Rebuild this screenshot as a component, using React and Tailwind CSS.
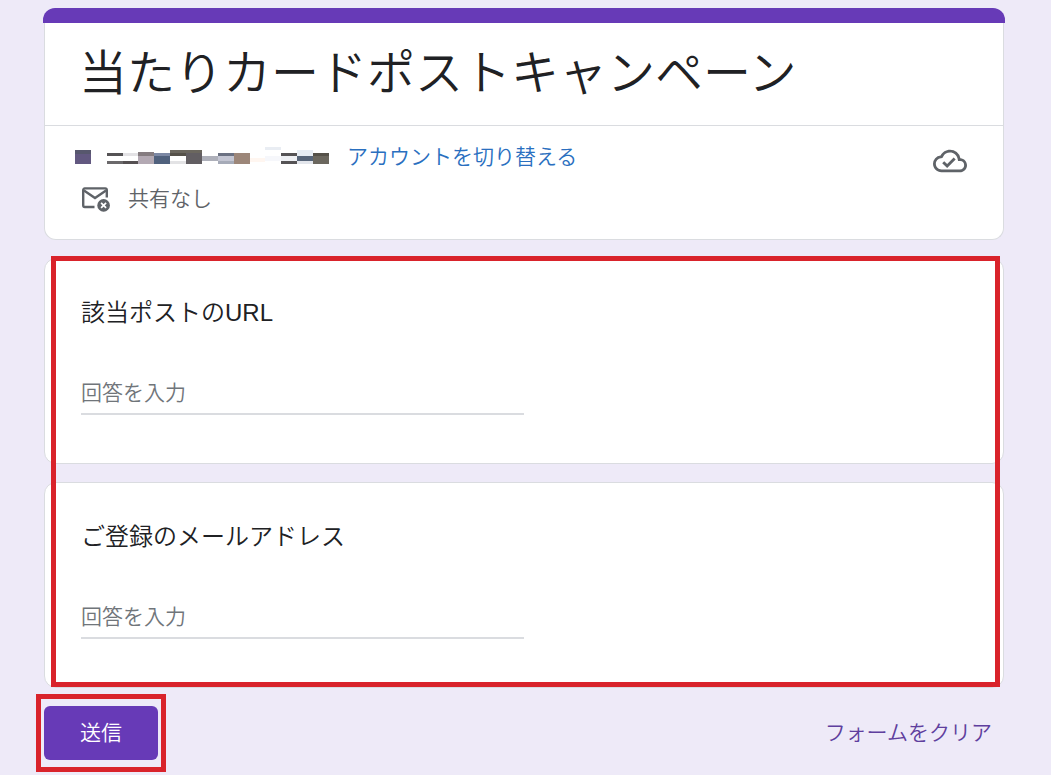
import { useState } from 'react';
import { MdOutlineCloudDone } from 'react-icons/md';

const questions = [
    { id: 'post-url', label: '該当ポストのURL', type: 'url' },
    { id: 'email', label: 'ご登録のメールアドレス', type: 'email' },
];

// [x, y, width, height, color]
const nameBlocks = [
    [0, 5, 16, 4, '#57576d'],
    [0, 9, 16, 10, '#625880'],
    [32, 8, 16, 3, '#555355'],
    [32, 16, 16, 3, '#6b696b'],
    [48, 8, 15, 3, '#e3e2e5'],
    [48, 16, 15, 3, '#555052'],
    [63, 7, 16, 4, '#857c80'],
    [63, 11, 16, 8, '#b3a9b3'],
    [79, 8, 16, 3, '#7c88a4'],
    [79, 11, 16, 8, '#50617d'],
    [95, 5, 32, 3, '#6b675e'],
    [95, 8, 16, 3, '#555149'],
    [95, 16, 16, 3, '#e3e3e5'],
    [111, 8, 16, 11, '#625e62'],
    [127, 11, 16, 5, '#aeb0ba'],
    [143, 8, 16, 3, '#6b7182'],
    [143, 11, 16, 5, '#c4c6d3'],
    [143, 16, 16, 3, '#a6abb8'],
    [159, 8, 16, 11, '#9c8679'],
    [175, 13, 15, 4, '#fff6f0'],
    [190, 2, 16, 3, '#e9edf3'],
    [190, 11, 16, 5, '#f6f7fb'],
    [206, 8, 16, 3, '#555355'],
    [206, 11, 16, 5, '#eef0f4'],
    [206, 16, 16, 3, '#555355'],
    [222, 5, 16, 6, '#e7edf4'],
    [222, 11, 16, 5, '#576579'],
    [222, 16, 16, 3, '#e3e6ec'],
    [238, 8, 16, 3, '#555149'],
    [238, 11, 16, 8, '#6b675e'],
];

function MaskedName() {
    return (
        <svg width="254" height="24" viewBox="0 0 254 24" shapeRendering="crispEdges" aria-hidden="true">
            {nameBlocks.map(([x, y, w, h, color]) => (
                <rect key={`${x}-${y}`} x={x} y={y} width={w} height={h} fill={color} />
            ))}
        </svg>
    );
}

function MailOffIcon() {
    return (
        <svg width="28" height="26" viewBox="0 0 28 26" fill="none" aria-hidden="true">
            <path
                d="M12.5 21H2.8C1.8 21 1.2 20.2 1.2 19.2V4.2C1.2 3.2 1.8 2.4 2.8 2.4H23.2C24.2 2.4 24.8 3.2 24.8 4.2V11.5"
                stroke="#5f6368"
                strokeWidth="2.4"
            />
            <path d="M2 4.6L13 12L24 4.6" stroke="#5f6368" strokeWidth="2.4" />
            <circle cx="21.6" cy="19.4" r="6.3" fill="#5f6368" />
            <path d="M19.1 16.9L24.1 21.9M24.1 16.9L19.1 21.9" stroke="#fff" strokeWidth="1.7" />
        </svg>
    );
}

function Question({ id, label, type }) {
    const [value, setValue] = useState('');

    return (
        <div className="rounded-xl border border-[#dadce0] bg-white px-9 pt-9 pb-12">
            <label htmlFor={id} className="block text-2xl leading-9 text-[#202124]">
                {label}
            </label>
            <input
                id={id}
                type={type}
                value={value}
                onChange={(e) => setValue(e.target.value)}
                placeholder="回答を入力"
                className="mt-10 block h-11 w-1/2 border-b-2 border-[#dadce0] bg-transparent pt-0.5 text-[21px] text-[#202124] outline-none placeholder:text-[#70757a]"
            />
        </div>
    );
}

export default function App() {
    return (
        <div className="min-h-screen bg-[#eeeaf8] pt-2 pr-[47px] pl-11 font-['Liberation_Sans','Noto_Sans_CJK_JP',sans-serif] font-[350]">
            <form onSubmit={(e) => e.preventDefault()}>
                <header className="rounded-xl border-x border-b border-[#dadce0] bg-white">
                    <div className="-mx-0.5 h-[15px] rounded-t-xl bg-[#673ab7]" />
                    <h1 className="border-b border-[#dadce0] px-[34px] pt-[18px] pb-[18px] text-5xl leading-[66px] text-[#202124]">
                        当たりカードポストキャンペーン
                    </h1>
                    <div className="flex items-start justify-between pt-[15px] pr-9 pb-6 pl-[30px]">
                        <div>
                            <div className="flex items-center gap-[18px] text-[21px] leading-8">
                                <MaskedName />
                                <a href="#" className="text-[#2a6fbf]">
                                    アカウントを切り替える
                                </a>
                            </div>
                            <div className="mt-[10px] flex items-center gap-[18px] pl-[7px] text-[21px] leading-8 text-[#5f6368]">
                                <MailOffIcon />
                                <span>共有なし</span>
                            </div>
                        </div>
                        <MdOutlineCloudDone size={34} className="mt-[3px] text-[#5f6368]" />
                    </div>
                </header>

                <div className="relative mt-[18px] flex flex-col gap-[18px]">
                    {questions.map((q) => (
                        <Question key={q.id} {...q} />
                    ))}
                    <div className="pointer-events-none absolute -top-0.5 right-1 bottom-px left-[7px] border-5 border-[#d9232b]" />
                </div>

                <div className="mt-[18px] flex items-center justify-between pb-3">
                    <div className="relative">
                        <button type="submit" className="block h-[54px] rounded-md bg-[#673ab7] px-9 text-[21px] text-white">
                            送信
                        </button>
                        <div className="pointer-events-none absolute -inset-x-2 -inset-y-3 border-5 border-[#d9232b]" />
                    </div>
                    <button type="reset" className="px-3 text-[21px] leading-8 text-[#5f3f9e]">
                        フォームをクリア
                    </button>
                </div>
            </form>
        </div>
    );
}
